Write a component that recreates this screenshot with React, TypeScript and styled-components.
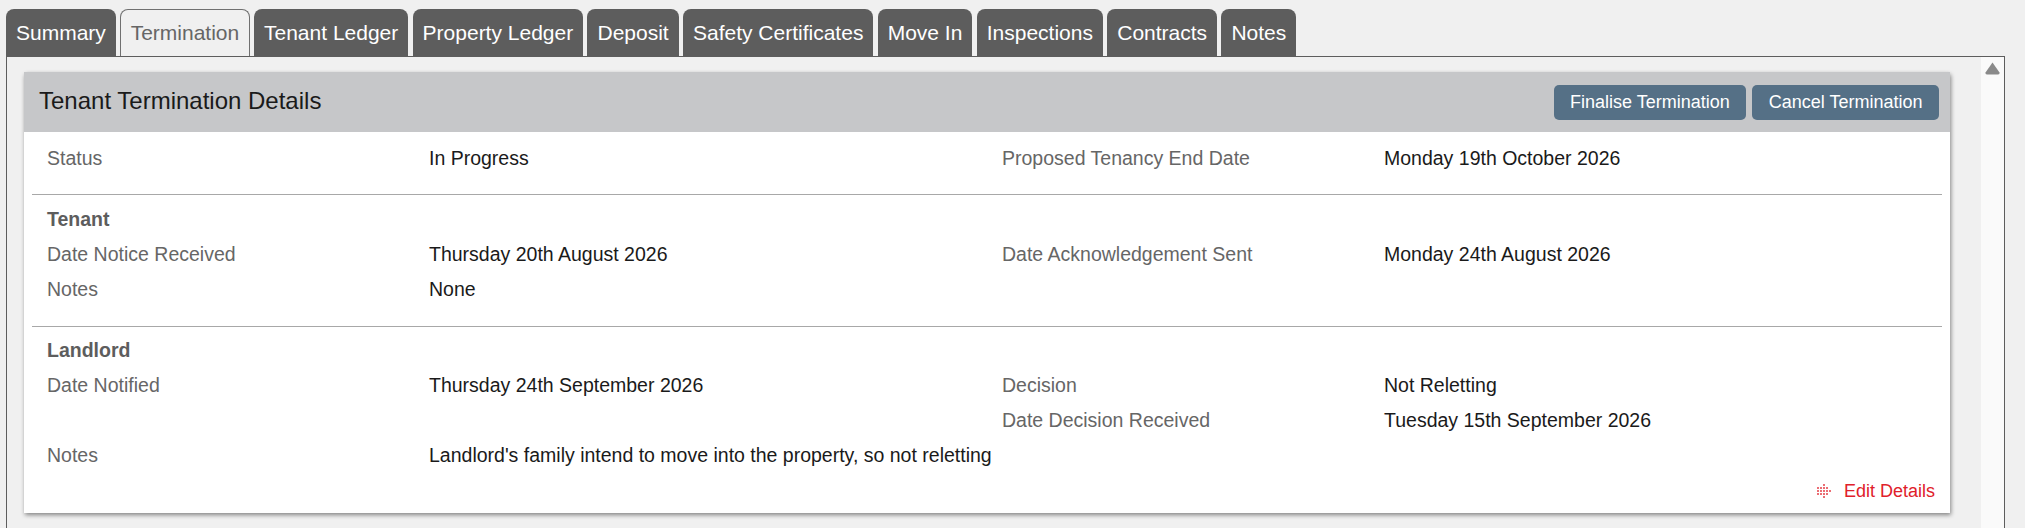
import React from 'react';
import styled, { createGlobalStyle } from 'styled-components';

const GlobalStyle = createGlobalStyle`
    html, body {
        margin: 0;
        padding: 0;
        height: 100%;
        background: #f0f0f0;
        font-family: "Liberation Sans", Arial, sans-serif;
        overflow: hidden;
    }
`;

const Page = styled.div`
    height: 100vh;
    box-sizing: border-box;
    padding: 9px 20px 0 6px;
    display: flex;
    flex-direction: column;
`;

const TabBar = styled.div`
    display: flex;
    gap: 4.3px;
    height: 47px;
`;

const Tab = styled.div<{ $active?: boolean }>`
    box-sizing: border-box;
    height: 47px;
    padding: 0 ${props => (props.$active ? '9.5px' : '10px')};
    display: flex;
    align-items: center;
    font-size: 21px;
    border-radius: 8px 8px 0 0;
    color: ${props => (props.$active ? '#666666' : '#ffffff')};
    background: ${props => (props.$active ? '#f0f0f0' : '#5d5d5d')};
    border: ${props => (props.$active ? '1px solid #707070' : 'none')};
    border-bottom: none;
`;

const Frame = styled.div`
    flex: 1;
    display: flex;
    min-height: 0;
    border: 1px solid #5d5d5d;
    border-bottom: none;
`;

const Content = styled.div`
    flex: 1;
    padding: 15px 31px 0 17px;
`;

const ScrollTrack = styled.div`
    width: 23px;
    background: #fafafa;
    display: flex;
    justify-content: center;
    align-items: flex-start;
    padding-top: 5px;
`;

const Panel = styled.div`
    background: #ffffff;
    height: 441px;
    box-shadow: 1px 2px 4px rgba(0, 0, 0, 0.45);
    border-radius: 3px 3px 0 0;
    display: flex;
    flex-direction: column;
`;

const PanelHeader = styled.div`
    height: 60px;
    flex: none;
    background: #c6c7c9;
    padding: 0 11px 0 15px;
    display: flex;
    align-items: center;
    justify-content: space-between;
`;

const Title = styled.div`
    font-size: 24px;
    color: #1a1a1a;
    padding-bottom: 2px;
`;

const Actions = styled.div`
    display: flex;
    gap: 6px;
`;

const ActionButton = styled.button`
    height: 35px;
    padding: 0 16.5px;
    border: none;
    border-radius: 5px;
    background: #557086;
    color: #ffffff;
    font-family: inherit;
    font-size: 18px;
`;

const Section = styled.div<{ $top: number; $bottom: number; $divider?: boolean }>`
    margin: 0 8px;
    padding: ${props => props.$top}px 15px ${props => props.$bottom}px;
    border-top: ${props => (props.$divider ? '1px solid #a8a8a8' : 'none')};
`;

const Row = styled.div`
    display: grid;
    grid-template-columns: 382px 573px 382px 1fr;
    height: 35px;
    align-items: center;
    font-size: 19.5px;
`;

const Label = styled.div`
    color: #666666;
`;

const Value = styled.div`
    color: #1a1a1a;
    white-space: nowrap;
`;

const SectionTitle = styled.div`
    height: 35px;
    display: flex;
    align-items: center;
    font-size: 19.5px;
    font-weight: bold;
    color: #5d5d5d;
`;

const Footer = styled.div`
    margin-top: auto;
    height: 33px;
    flex: none;
    padding-right: 15px;
    display: flex;
    justify-content: flex-end;
    align-items: flex-start;
    color: #e0202a;
    font-size: 18px;
    line-height: 22px;
`;

const EditLink = styled.span`
    display: flex;
    align-items: center;
    gap: 13px;
`;

const IconBox = styled.svg`
    flex: none;
    display: block;
`;

// rows of the dotted move glyph next to "Edit Details": [first column, dot count]
const iconRows: [number, number][] = [[2, 1], [0, 4], [0, 5], [0, 4], [2, 1]];

const DottedIcon = () => (
    <IconBox width="14" height="16" viewBox="0 0 14 16">
        {iconRows.map(([start, count], row) =>
            Array.from({ length: count }, (_, i) => (
                <rect
                    key={`${row}-${i}`}
                    x={(start + i) * 3}
                    y={row * 3 + 1}
                    width="2"
                    height="2"
                    fill="#e0202a"
                    opacity="0.65"
                />
            ))
        )}
    </IconBox>
);

const tabs = ['Summary', 'Termination', 'Tenant Ledger', 'Property Ledger', 'Deposit', 'Safety Certificates', 'Move In', 'Inspections', 'Contracts', 'Notes'];

const App = function () {
    return <>
        <GlobalStyle />
        <Page>
            <TabBar>
                {tabs.map(tab => <Tab key={tab} $active={tab === 'Termination'}>{tab}</Tab>)}
            </TabBar>
            <Frame>
                <Content>
                    <Panel>
                        <PanelHeader>
                            <Title>Tenant Termination Details</Title>
                            <Actions>
                                <ActionButton>Finalise Termination</ActionButton>
                                <ActionButton>Cancel Termination</ActionButton>
                            </Actions>
                        </PanelHeader>
                        <Section $top={9} $bottom={18}>
                            <Row>
                                <Label>Status</Label><Value>In Progress</Value>
                                <Label>Proposed Tenancy End Date</Label><Value>Monday 19th October 2026</Value>
                            </Row>
                        </Section>
                        <Section $top={7} $bottom={19} $divider>
                            <SectionTitle>Tenant</SectionTitle>
                            <Row>
                                <Label>Date Notice Received</Label><Value>Thursday 20th August 2026</Value>
                                <Label>Date Acknowledgement Sent</Label><Value>Monday 24th August 2026</Value>
                            </Row>
                            <Row>
                                <Label>Notes</Label><Value>None</Value>
                            </Row>
                        </Section>
                        <Section $top={6} $bottom={0} $divider>
                            <SectionTitle>Landlord</SectionTitle>
                            <Row>
                                <Label>Date Notified</Label><Value>Thursday 24th September 2026</Value>
                                <Label>Decision</Label><Value>Not Reletting</Value>
                            </Row>
                            <Row>
                                <span /><span />
                                <Label>Date Decision Received</Label><Value>Tuesday 15th September 2026</Value>
                            </Row>
                            <Row>
                                <Label>Notes</Label><Value>Landlord's family intend to move into the property, so not reletting</Value>
                            </Row>
                        </Section>
                        <Footer>
                            <EditLink><DottedIcon />Edit Details</EditLink>
                        </Footer>
                    </Panel>
                </Content>
                <ScrollTrack>
                    <svg width="15" height="13" viewBox="0 0 15 13">
                        <path d="M7.5 0.5 L14.5 10.5 Q15 12.5 13 12.5 L2 12.5 Q0 12.5 0.5 10.5 Z" fill="#8a8a8a" />
                    </svg>
                </ScrollTrack>
            </Frame>
        </Page>
    </>;
};

export default App;
